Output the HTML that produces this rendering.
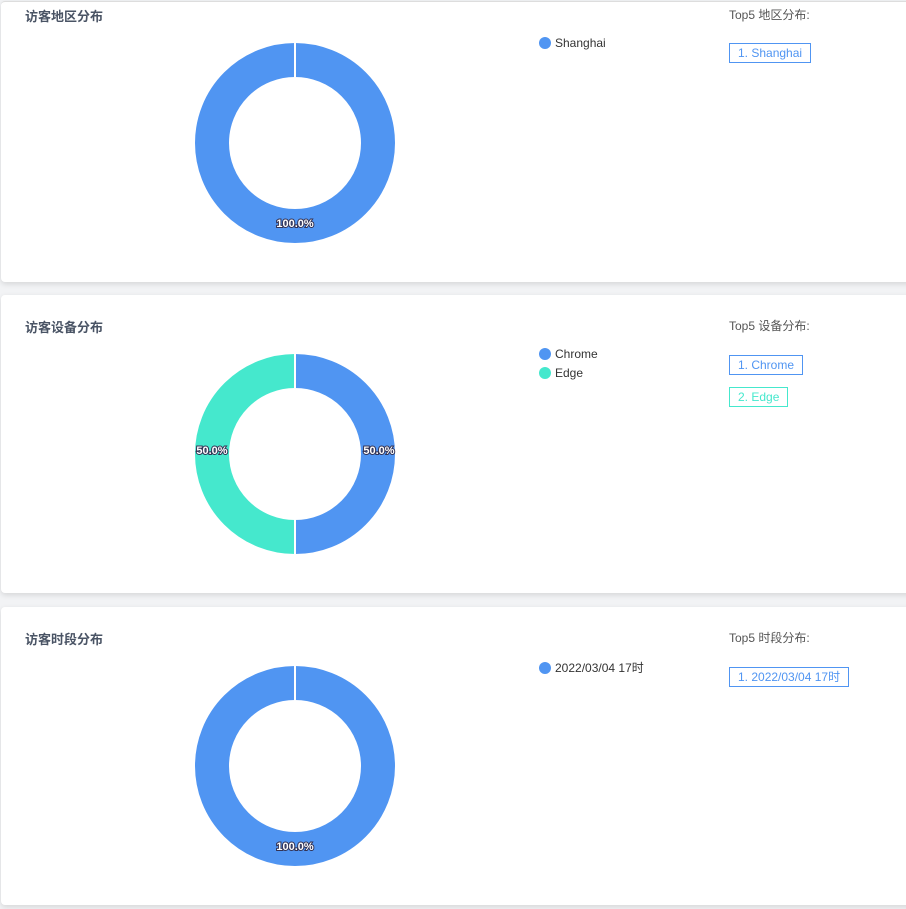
<!DOCTYPE html>
<html><head><meta charset="utf-8"><style>
body{margin:0;width:906px;height:909px;background:#f2f3f5;font-family:"Liberation Sans","Noto Sans CJK SC",sans-serif;position:relative;overflow:hidden}
.card{position:absolute;left:1px;width:920px;background:#fff;border-radius:4px;box-shadow:0 2px 6px rgba(0,0,0,.12)}
.t{position:absolute;left:24px;top:4px;font-size:13px;font-weight:bold;color:#4a5465}
.lg{position:absolute;left:538px;font-size:12px;color:#333}
.lg i{display:inline-block;width:12px;height:12px;border-radius:50%;vertical-align:-2px;margin-right:4px}
.top{position:absolute;left:728px;top:4px;font-size:12px;color:#555}
.tag{position:absolute;left:728px;font-size:12px;height:18px;line-height:18px;padding:0 8px;border:1px solid}
svg{position:absolute;left:193px}
.p{font-size:11px;font-weight:bold;fill:#fff;paint-order:stroke;stroke:#335;stroke-width:2px;font-family:"Liberation Sans",sans-serif}
</style></head><body>
<div class="card" style="top:1px;height:280px;border-top:1px solid #ddd">
<div class="t">访客地区分布</div>
<svg style="top:40px" width="203" height="203"><circle cx="101" cy="101" r="83" fill="none" stroke="#5095f2" stroke-width="34"/><line x1="101" y1="0" x2="101" y2="35" stroke="#fff" stroke-width="2"/><text class="p" x="101" y="185" text-anchor="middle">100.0%</text></svg>
<div class="lg" style="top:34px"><i style="background:#5095f2"></i>Shanghai</div>
<div class="top">Top5 地区分布:</div>
<div class="tag" style="top:41px;color:#5095f2;border-color:#5095f2">1. Shanghai</div>
</div>
<div class="card" style="top:295px;height:298px">
<div class="t" style="top:22px">访客设备分布</div>
<svg style="top:58px" width="203" height="203"><path d="M101 18 A83 83 0 0 1 101 184" fill="none" stroke="#5095f2" stroke-width="34"/><path d="M101 184 A83 83 0 0 1 101 18" fill="none" stroke="#45e8cd" stroke-width="34"/><line x1="101" y1="0" x2="101" y2="35" stroke="#fff" stroke-width="2"/><line x1="101" y1="167" x2="101" y2="203" stroke="#fff" stroke-width="2"/><text class="p" x="185" y="101" text-anchor="middle">50.0%</text><text class="p" x="18" y="101" text-anchor="middle">50.0%</text></svg>
<div class="lg" style="top:52px"><i style="background:#5095f2"></i>Chrome</div>
<div class="lg" style="top:71px"><i style="background:#45e8cd"></i>Edge</div>
<div class="top" style="top:22px">Top5 设备分布:</div>
<div class="tag" style="top:60px;color:#5095f2;border-color:#5095f2">1. Chrome</div>
<div class="tag" style="top:92px;color:#45e8cd;border-color:#45e8cd">2. Edge</div>
</div>
<div class="card" style="top:607px;height:298px">
<div class="t" style="top:22px">访客时段分布</div>
<svg style="top:58px" width="203" height="203"><circle cx="101" cy="101" r="83" fill="none" stroke="#5095f2" stroke-width="34"/><line x1="101" y1="0" x2="101" y2="35" stroke="#fff" stroke-width="2"/><text class="p" x="101" y="185" text-anchor="middle">100.0%</text></svg>
<div class="lg" style="top:52px"><i style="background:#5095f2"></i>2022/03/04 17时</div>
<div class="top" style="top:22px">Top5 时段分布:</div>
<div class="tag" style="top:60px;color:#5095f2;border-color:#5095f2">1. 2022/03/04 17时</div>
</div>
</body></html>
